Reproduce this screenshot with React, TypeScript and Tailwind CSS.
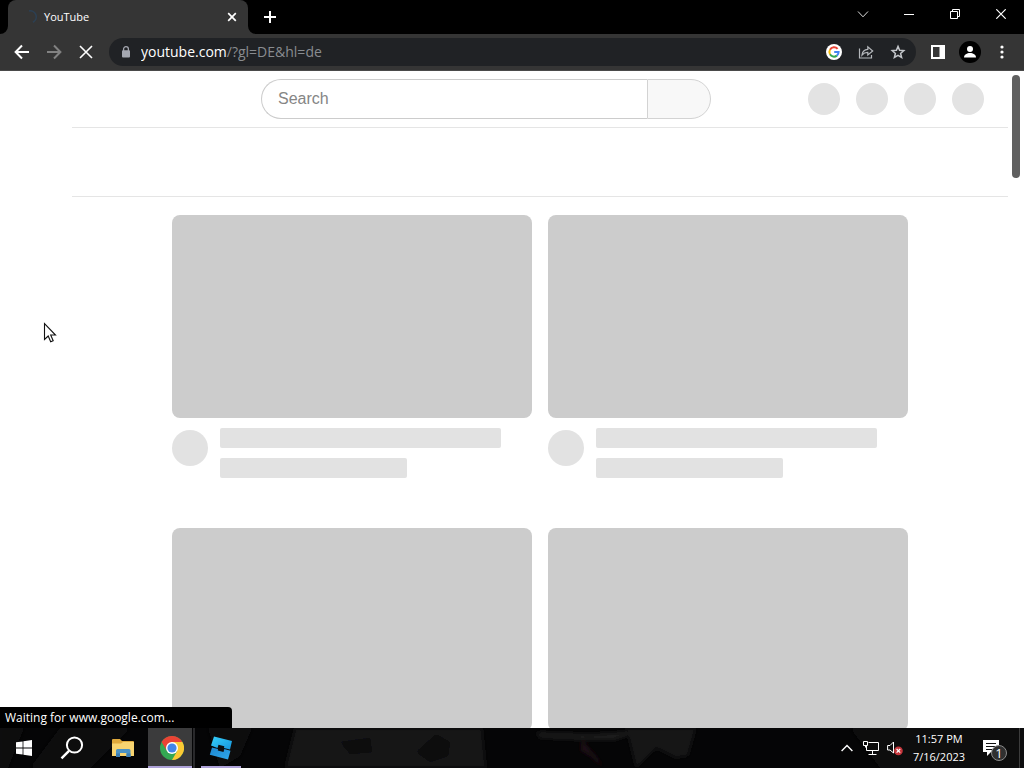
import type { ReactNode } from "react";

const uiFont = "font-['Segoe_UI','Open_Sans','Noto_Sans',sans-serif]";

function Spinner() {
  return (
    <svg width="16" height="16" viewBox="0 0 16 16" fill="none" aria-hidden="true">
      <path d="M7 2A6 6 0 0 1 11 13.2" stroke="#2c4054" strokeWidth="1.6" />
    </svg>
  );
}

function TabStrip() {
  return (
    <div className="flex h-[34px] shrink-0 bg-black pl-2 text-white">
      <div className="relative flex w-60 items-center rounded-t-lg bg-[#353535] pr-2 pl-3.5">
        <svg className="absolute bottom-0 -left-2" width="8" height="8" viewBox="0 0 8 8" aria-hidden="true">
          <path d="M8 0V8H0A8 8 0 0 0 8 0Z" fill="#353535" />
        </svg>
        <svg className="absolute -right-2 bottom-0" width="8" height="8" viewBox="0 0 8 8" aria-hidden="true">
          <path d="M0 0V8H8A8 8 0 0 1 0 0Z" fill="#353535" />
        </svg>
        <Spinner />
        <span className="ml-1.5 flex-1 text-[11px]">YouTube</span>
        <button type="button" aria-label="Close tab" className="flex size-4 items-center justify-center">
          <svg width="10" height="10" viewBox="0 0 10 10" stroke="#fff" strokeWidth="1.7" aria-hidden="true">
            <path d="M1.2 1.2 8.8 8.8M8.8 1.2 1.2 8.8" />
          </svg>
        </button>
      </div>
      <button type="button" aria-label="New tab" className="ml-2 flex w-7 items-center justify-center">
        <svg width="12" height="12" viewBox="0 0 12 12" stroke="#fff" strokeWidth="2" aria-hidden="true">
          <path d="M6 0V12M0 6H12" />
        </svg>
      </button>
      <div className="ml-auto flex h-7">
        <button type="button" aria-label="Search tabs" className="flex w-[46px] items-center justify-center">
          <svg width="12" height="12" viewBox="0 0 12 12" fill="none" stroke="#ddd" aria-hidden="true">
            <path d="M1 3.5 6 8.8 11 3.5" />
          </svg>
        </button>
        <button type="button" aria-label="Minimize" className="flex w-[46px] items-center justify-center">
          <svg width="10" height="10" viewBox="0 0 10 10" stroke="#fff" aria-hidden="true">
            <path d="M0 5.5H10" />
          </svg>
        </button>
        <button type="button" aria-label="Restore" className="flex w-[46px] items-center justify-center">
          <svg width="10" height="10" viewBox="0 0 10 10" fill="none" stroke="#fff" aria-hidden="true">
            <path d="M.5 2.5H7.5V9.5H.5ZM2.5 2.5V.5H9.5V7.5H7.5" />
          </svg>
        </button>
        <button type="button" aria-label="Close" className="flex w-[46px] items-center justify-center">
          <svg width="10" height="10" viewBox="0 0 10 10" stroke="#fff" strokeWidth="1.2" aria-hidden="true">
            <path d="M.3 .3 9.7 9.7M9.7 .3 .3 9.7" />
          </svg>
        </button>
      </div>
    </div>
  );
}

function ToolButton({ label, children }: { label: string; children: ReactNode }) {
  return (
    <button type="button" aria-label={label} className="flex h-7 w-8 shrink-0 items-center justify-center">
      {children}
    </button>
  );
}

function Toolbar() {
  return (
    <div className="flex h-[37px] shrink-0 items-center border-b border-[#4a4a4a] bg-[#353535] px-1.5">
      <ToolButton label="Back">
        <svg width="16" height="16" viewBox="0 0 16 16" fill="none" stroke="#fff" strokeWidth="2" aria-hidden="true">
          <path d="M15 8H2M8 1.5 1.6 8 8 14.5" />
        </svg>
      </ToolButton>
      <ToolButton label="Forward">
        <svg width="16" height="16" viewBox="0 0 16 16" fill="none" stroke="#828282" strokeWidth="2" aria-hidden="true">
          <path d="M1 8H14M8 1.5 14.4 8 8 14.5" />
        </svg>
      </ToolButton>
      <ToolButton label="Stop loading">
        <svg width="14" height="14" viewBox="0 0 14 14" stroke="#fff" strokeWidth="1.6" aria-hidden="true">
          <path d="M1 1 13 13M13 1 1 13" />
        </svg>
      </ToolButton>
      <div className="mr-1.5 ml-[7px] flex h-7 min-w-0 flex-1 items-center rounded-full bg-[#202225] pr-0.5 pl-3">
        <svg className="shrink-0" width="10" height="12" viewBox="0 0 10 12" aria-hidden="true">
          <path d="M2.6 5V3.1a2.4 2.4 0 0 1 4.8 0V5" fill="none" stroke="#a4a7b0" strokeWidth="1.3" />
          <rect x="1" y="4.3" width="8" height="7.2" rx="1" fill="#a4a7b0" />
        </svg>
        <div className="ml-2.5 flex-1 truncate text-sm text-[#898c90]" role="textbox" aria-label="Address">
          <span className="text-white">youtube.com</span>/?gl=DE&amp;hl=de
        </div>
        <ToolButton label="Search with Google">
          <svg width="16" height="16" viewBox="0 0 16 16" fill="none" strokeWidth="2" aria-hidden="true">
            <circle cx="8" cy="8" r="8" fill="#fff" />
            <path d="M11.6 4.9A4.6 4.6 0 0 0 4 5.7" stroke="#ea4335" />
            <path d="M4 5.7A4.6 4.6 0 0 0 4 10.3" stroke="#fbbc05" />
            <path d="M4 10.3A4.6 4.6 0 0 0 10.9 11.6" stroke="#34a853" />
            <path d="M10.9 11.6A4.6 4.6 0 0 0 12.6 8H8.2" stroke="#4285f4" />
          </svg>
        </ToolButton>
        <ToolButton label="Share this page">
          <svg width="16" height="16" viewBox="0 0 16 16" fill="none" stroke="#b4b7bb" strokeWidth="1.2" aria-hidden="true">
            <path d="M1.5 4.5V14H13.5V11M4 11C4.4 7.5 6 5.7 9.8 5.4V2.7L14.7 7 9.8 11V8.4C7.2 8.4 5.5 9.2 4 11Z" />
          </svg>
        </ToolButton>
        <ToolButton label="Bookmark this tab">
          <svg width="16" height="16" viewBox="0 0 16 16" fill="none" stroke="#c4c7cb" strokeWidth="1.5" aria-hidden="true">
            <path d="M8 2.4 9.6 6.2 13.8 6.6 10.6 9.4 11.6 13.4 8 11.3 4.4 13.4 5.4 9.4 2.2 6.6 6.4 6.2Z" />
          </svg>
        </ToolButton>
      </div>
      <ToolButton label="Side panel">
        <svg width="14" height="14" viewBox="0 0 14 14" aria-hidden="true">
          <path d="M0 0H14V14H0ZM2 2V12H8.5V2Z" fill="#fff" fillRule="evenodd" />
        </svg>
      </ToolButton>
      <ToolButton label="Profile">
        <svg width="22" height="22" viewBox="0 0 22 22" aria-hidden="true">
          <circle cx="11" cy="11" r="11" fill="#000" />
          <circle cx="11" cy="8" r="3" fill="#fff" />
          <path d="M5 16.5C5 13.5 8 12 11 12S17 13.5 17 16.5Z" fill="#fff" />
        </svg>
      </ToolButton>
      <ToolButton label="Menu">
        <svg width="4" height="14" viewBox="0 0 4 14" fill="#fff" aria-hidden="true">
          <circle cx="2" cy="2" r="1.6" />
          <circle cx="2" cy="7" r="1.6" />
          <circle cx="2" cy="12" r="1.6" />
        </svg>
      </ToolButton>
    </div>
  );
}

function VideoPlaceholder() {
  return (
    <div className="h-[313px]">
      <div className="h-[203px] rounded-lg bg-[#cccccc]" />
      <div className="flex gap-3 pt-2.5">
        <div className="mt-0.5 size-9 shrink-0 rounded-full bg-[#e2e2e2]" />
        <div className="flex flex-1 flex-col gap-2.5">
          <div className="h-5 w-[281px] rounded-xs bg-[#e2e2e2]" />
          <div className="h-5 w-[187px] rounded-xs bg-[#e2e2e2]" />
        </div>
      </div>
    </div>
  );
}

function Page() {
  return (
    <main className="relative flex min-h-0 flex-1 overflow-hidden bg-white">
      <div className="min-w-0 flex-1">
        <header className="flex h-14 items-center pr-6 pl-[261px]">
          <form className="flex h-10 w-[450px]" onSubmit={(e) => e.preventDefault()}>
            <input
              type="text"
              aria-label="Search"
              placeholder="Search"
              className="min-w-0 flex-1 rounded-l-full border border-r-0 border-[#cccccc] bg-white pl-4 font-['Liberation_Sans',Arial,sans-serif] text-base text-[#222] outline-none placeholder:text-[#858585]"
            />
            <button
              type="submit"
              aria-label="Submit search"
              className="w-16 rounded-r-full border border-[#d3d3d3] bg-[#f8f8f8]"
            />
          </form>
          <div className="ml-auto flex gap-4">
            {[0, 1, 2, 3].map((n) => (
              <div key={n} className="size-8 rounded-full bg-[#e3e3e3]" />
            ))}
          </div>
        </header>
        <div className="ml-[72px]">
          <div className="h-[70px] border-y border-[#e5e5e5]" />
          <div className="grid grid-cols-[360px_360px] justify-center gap-x-4 pt-[18px]">
            {[0, 1, 2, 3].map((n) => (
              <VideoPlaceholder key={n} />
            ))}
          </div>
        </div>
      </div>
      <div className="w-4 shrink-0 px-1 pt-1">
        <div className="h-[103px] rounded-full bg-[#606060]" />
      </div>
      <svg className="absolute top-[251px] left-[43px]" width="14" height="22" viewBox="0 0 14 22" aria-hidden="true">
        <path
          d="M1.5 1.5V17.5L5.2 14 7.7 19.8 10.2 18.7 7.7 13H12.5Z"
          fill="#fff"
          stroke="#111"
          strokeWidth="1.1"
        />
      </svg>
      <div
        role="status"
        className={`absolute bottom-0 left-0 flex h-[21px] w-[232px] items-center rounded-tr-sm bg-black pl-[5px] text-xs text-white ${uiFont}`}
      >
        Waiting for www.google.com...
      </div>
    </main>
  );
}

function Wallpaper() {
  return (
    <svg
      className="absolute inset-0 size-full"
      viewBox="0 0 1024 40"
      preserveAspectRatio="none"
      aria-hidden="true"
    >
      <defs>
        <filter id="wallpaper-soft">
          <feGaussianBlur stdDeviation="2" />
        </filter>
      </defs>
      <rect width="1024" height="40" fill="#050506" />
      <g filter="url(#wallpaper-soft)">
        <path d="M0 0H24L8 40H0ZM60 0H130L90 40H30ZM208 0H252L240 28 220 40Z" fill="#0e0e0f" />
        <path d="M295 0H482L486 40H285Z" fill="#131314" />
        <path d="M434 0H482L486 40H440L452 24 448 10Z" fill="#161617" />
        <path d="M340 14 370 10 372 24 350 26ZM436 6 450 14 448 28 430 34 416 24Z" fill="#0e0e0f" />
        <path d="M536 4 590 6 640 3 615 12 582 12 540 10Z" fill="#1a1a1a" />
        <path d="M582 12 596 28 604 40 590 28 580 22Z" fill="#1e1012" />
        <path d="M626 0H696L688 28 676 30 656 20 636 40Z" fill="#161616" />
        <path d="M850 0H1024V40H880Z" fill="#0a0a0b" />
      </g>
    </svg>
  );
}

function TaskButton({ label, width, children }: { label: string; width: string; children: ReactNode }) {
  return (
    <button type="button" aria-label={label} className={`flex h-10 shrink-0 items-center justify-center ${width}`}>
      {children}
    </button>
  );
}

function Taskbar() {
  return (
    <footer className={`relative h-10 shrink-0 overflow-hidden text-white ${uiFont}`}>
      <Wallpaper />
      <div className="relative flex h-10">
        <TaskButton label="Start" width="w-12">
          <svg width="16" height="16" viewBox="0 0 16 16" fill="#fff" aria-hidden="true">
            <path d="M0 2.3 6.6 1.4V7.6H0ZM7.4 1.3 16 0V7.6H7.4ZM0 8.4H6.6V14.6L0 13.7ZM7.4 8.4H16V16L7.4 14.7Z" />
          </svg>
        </TaskButton>
        <TaskButton label="Search" width="w-12">
          <svg width="24" height="24" viewBox="0 0 24 24" fill="none" stroke="#fff" strokeWidth="2" aria-hidden="true">
            <circle cx="14.5" cy="9" r="7.6" />
            <path d="M9 14.8 1.5 22.3" strokeWidth="2.4" />
          </svg>
        </TaskButton>
        <TaskButton label="File Explorer" width="w-[54px]">
          <svg width="22" height="20" viewBox="0 0 22 20" aria-hidden="true">
            <path d="M0 2Q0 1 1 1H8L10 3H21Q22 3 22 4V18H0Z" fill="#dfa93c" />
            <path d="M0 5.5H9L11 4H22V18H0Z" fill="#f8d470" />
            <path d="M4 19V12.5Q4 11 5.5 11H17Q18.500 11 18.500 12.500V19H14.500V15H8V19Z" fill="#4b92c4" />
            <path d="M4 19V15.500H8V19ZM14.500 19V15.500H18.500V19Z" fill="#3b7db2" />
          </svg>
        </TaskButton>
        <button
          type="button"
          aria-label="Google Chrome"
          className="-ml-0.5 flex h-10 w-11 shrink-0 items-center justify-center border-b-2 border-[#aea2d8] bg-[#3b3b3c] pt-0.5 pl-1"
        >
          <svg width="24" height="24" viewBox="0 0 24 24" aria-hidden="true">
            <circle cx="12" cy="12" r="12" fill="#34a853" />
            <path d="M1.6 6A12 12 0 0 1 22.4 6H12L7 15Z" fill="#ea4335" />
            <path d="M22.4 6A12 12 0 0 1 12 24L17.2 15 12 6Z" fill="#fcc934" />
            <circle cx="12" cy="12" r="6" fill="#fff" />
            <circle cx="12" cy="12" r="4.6" fill="#4285e8" />
          </svg>
        </button>
        <div className="ml-px h-10 w-0.5 shrink-0 bg-[#29292b]" />
        <button
          type="button"
          aria-label="Roblox Studio"
          className="ml-1.5 flex h-10 w-10 shrink-0 items-center justify-center border-b-2 border-[#aea2d8] pt-0.5"
        >
          <svg width="24" height="24" viewBox="0 0 24 24" aria-hidden="true">
            <defs>
              <linearGradient id="studio-top" x1="0" y1="0" x2="1" y2="1">
                <stop offset="0" stopColor="#35d0fb" />
                <stop offset="1" stopColor="#1795dc" />
              </linearGradient>
              <linearGradient id="studio-bottom" x1="0" y1="0" x2="1" y2="1">
                <stop offset="0" stopColor="#1c86d0" />
                <stop offset="1" stopColor="#2fa9ec" />
              </linearGradient>
            </defs>
            <path d="M5 .5 23 5 21 13.500 15 12 15.300 10.200 9.500 8.800 8.500 12 2 9.500Z" fill="url(#studio-top)" />
            <path d="M3 11.500 9 13 8.800 14.600 14.500 16 15.300 13 21.500 14.700 19 23.500 .8 18.800Z" fill="url(#studio-bottom)" />
          </svg>
        </button>
        <div className="ml-auto flex items-center">
          <TaskButton label="Show hidden icons" width="w-6">
            <svg width="12" height="8" viewBox="0 0 12 8" fill="none" stroke="#fff" strokeWidth="1.4" aria-hidden="true">
              <path d="M.6 7 6 1.4 11.4 7" />
            </svg>
          </TaskButton>
          <TaskButton label="Network" width="w-6">
            <svg width="16" height="14" viewBox="0 0 16 14" fill="none" stroke="#fff" aria-hidden="true">
              <path d="M5.5 1.5H15.5V9.5H3.500V5M9.500 9.500V13M5.500 13.500H13.500M.5 .5H4.500V4.500H.5ZM2.500 4.500V6.500" />
            </svg>
          </TaskButton>
          <TaskButton label="Volume muted" width="w-6">
            <svg width="16" height="16" viewBox="0 0 16 16" fill="none" aria-hidden="true">
              <path d="M.6 5.5H3L6.5 2V13L3 10H.6Z" stroke="#fff" />
              <circle cx="11.4" cy="10.8" r="4.4" fill="#c5363c" />
              <path d="M9.600 9 13.200 12.600M13.200 9 9.600 12.600" stroke="#fff" strokeWidth="1.2" />
            </svg>
          </TaskButton>
          <div className="w-16 text-center text-[11px] leading-[18px]">
            <div>11:57 PM</div>
            <div>7/16/2023</div>
          </div>
          <TaskButton label="Notifications" width="w-12">
            <svg width="26" height="26" viewBox="0 0 26 26" aria-hidden="true">
              <path d="M1 5H17V17H9L5 21V17H1Z" fill="#fff" />
              <path d="M4 8.500H14M4 11.500H14M4 14.500H10" stroke="#111" />
              <circle cx="16.500" cy="20" r="5.500" fill="#303030" />
              <circle cx="17" cy="18" r="7.500" fill="#303030" stroke="#8a8a8a" />
              <text x="17" y="22.500" textAnchor="middle" fontSize="13" fill="#fff">
                1
              </text>
            </svg>
          </TaskButton>
          <div className="mr-1 h-10 w-px bg-[#3c3c3c]" />
        </div>
      </div>
    </footer>
  );
}

export default function App() {
  return (
    <div className={`flex h-screen flex-col overflow-hidden bg-white ${uiFont}`}>
      <TabStrip />
      <Toolbar />
      <Page />
      <Taskbar />
    </div>
  );
}
